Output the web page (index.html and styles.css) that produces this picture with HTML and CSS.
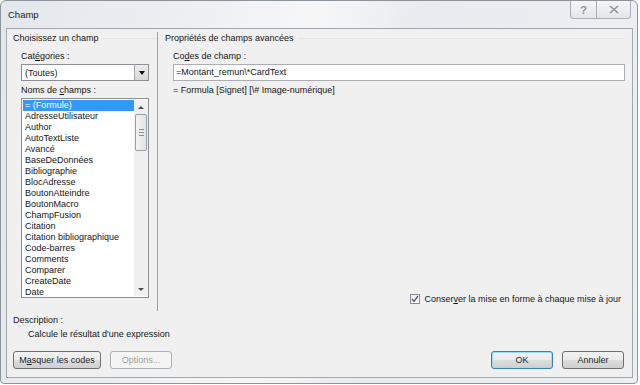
FILE: index.html
```html
<!DOCTYPE html>
<html lang="fr">
<head>
  <meta charset="UTF-8">
  <title>Champ</title>
  <link rel="stylesheet" href="styles.css">
</head>
<body>
  <div class="window">
    <div class="titlebar">
      <span class="title">Champ</span>
      <div class="caption-buttons">
        <span class="cbtn help">?</span>
        <span class="cbtn close">
          <svg width="10" height="9" viewBox="0 0 10 9"><path d="M1 1 L9 8 M9 1 L1 8" stroke="#8d939a" stroke-width="1.6" fill="none"/></svg>
        </span>
      </div>
    </div>

    <div class="client">
      <div class="groups">
        <!-- Left: field chooser -->
        <section class="group group-left">
          <div class="group-title">Choisissez un champ</div>
          <div class="field">
            <label class="caption">Cat<u>é</u>gories :</label>
            <div class="combo">
              <span class="combo-text">(Toutes)</span>
              <span class="combo-btn"><span class="arrow-down"></span></span>
            </div>
          </div>
          <div class="field">
            <label class="caption tight">Noms de <u>c</u>hamps :</label>
            <div class="listbox">
              <ul class="items" id="field-list"></ul>
              <div class="scrollbar">
                <span class="sb-up"></span>
                <span class="sb-thumb"><i></i><i></i><i></i></span>
                <span class="sb-track"></span>
                <span class="sb-down"></span>
              </div>
            </div>
          </div>
        </section>

        <!-- Right: advanced properties -->
        <section class="group group-right">
          <div class="group-title">Propriétés de champs avancées</div>
          <div class="field">
            <label class="caption">Co<u>d</u>es de champ :</label>
            <div class="textbox">=Montant_remun\*CardText</div>
            <div class="syntax">= Formula [Signet] [\# Image-numérique]</div>
          </div>
          <div class="keep-format">
            <span class="checkbox">
              <svg width="8" height="8" viewBox="0 0 8 8"><path d="M1 4 L3 6.5 L7 1" stroke="#4a5a78" stroke-width="1.3" fill="none"/></svg>
            </span>
            <span>Conser<u>v</u>er la mise en forme à chaque mise à jour</span>
          </div>
        </section>
      </div>

      <div class="description">
        <div>Description :</div>
        <div class="desc-text">Calcule le résultat d'une expression</div>
      </div>

      <div class="buttons">
        <button class="btn wide">M<u>a</u>squer les codes</button>
        <button class="btn" disabled>Options...</button>
        <span class="spacer"></span>
        <button class="btn default">OK</button>
        <button class="btn">Annuler</button>
      </div>
    </div>
  </div>

  <script>
    const fieldNames = [
      "= (Formule)", "AdresseUtilisateur", "Author", "AutoTextListe", "Avancé",
      "BaseDeDonnées", "Bibliographie", "BlocAdresse", "BoutonAtteindre",
      "BoutonMacro", "ChampFusion", "Citation", "Citation bibliographique",
      "Code-barres", "Comments", "Comparer", "CreateDate", "Date"
    ];

    const list = document.getElementById("field-list");
    fieldNames.forEach((name, index) => {
      const item = document.createElement("li");
      item.textContent = name;
      if (index === 0) {
        item.classList.add("selected");
      }
      list.appendChild(item);
    });
  </script>
</body>
</html>
```

FILE: styles.css
```css
html, body {
  margin: 0;
  padding: 0;
}
body {
  width: 640px;
  height: 385px;
  background-color: #ffffff;
  font-family: "Liberation Sans", Arial, sans-serif;
  font-size: 9px;
  color: #151515;
  overflow: hidden;
}
u {
  text-decoration: underline;
}

.window {
  width: 638px;
  height: 384px;
  box-sizing: border-box;
  border: 1px solid #8e949b;
  border-radius: 6px 6px 4px 4px;
  background: linear-gradient(100deg, #e3e7ec 0%, #eef0f3 30%, #f7f7f8 45%, #e8ebef 60%, #edf0f3 100%);
  display: flex;
  flex-direction: column;
}

.titlebar {
  height: 27px;
  display: flex;
  align-items: flex-start;
  justify-content: space-between;
}
.title {
  margin: 8px 0 0 7px;
  font-size: 9.5px;
  color: #222;
}
.caption-buttons {
  display: flex;
  margin-right: 6px;
}
.cbtn {
  height: 18px;
  box-sizing: border-box;
  border: 1px solid #a9aeb5;
  border-top: none;
  background: linear-gradient(#f4f5f6, #e3e6ea);
  display: flex;
  align-items: center;
  justify-content: center;
  color: #8d939a;
}
.cbtn.help {
  width: 27px;
  border-radius: 0 0 0 4px;
  font-size: 11px;
  font-weight: bold;
}
.cbtn.close {
  width: 34px;
  border-left: none;
  border-radius: 0 0 4px 0;
}

.client {
  flex: 1;
  margin: 0 4px 5px 5px;
  border: 1px solid #a3a8ae;
  background-color: #f0f0f0;
  display: flex;
  flex-direction: column;
  padding: 3px 0 8px 0;
}

.groups {
  display: flex;
  height: 279px;
}
.group-left {
  width: 144px;
  padding-left: 6px;
  border-right: 1px solid #a0a0a0;
}
.group-right {
  flex: 1;
  padding-left: 7px;
  padding-right: 7px;
  display: flex;
  flex-direction: column;
}
.group-title {
  height: 12px;
  line-height: 12px;
  display: flex;
  align-items: center;
  gap: 4px;
}
.group-title::after {
  content: "";
  flex: 1;
  border-top: 1px solid #e4e4e4;
}

.field {
  padding-left: 8px;
}
.caption {
  display: block;
  height: 12px;
  line-height: 12px;
  margin-top: 6px;
  margin-bottom: 2px;
}
.caption.tight {
  margin-top: 3px;
}

.combo {
  width: 128px;
  height: 17px;
  box-sizing: border-box;
  border: 1px solid #8c8f94;
  background-color: #ffffff;
  display: flex;
  align-items: center;
  justify-content: space-between;
}
.combo-text {
  padding-left: 3px;
}
.combo-btn {
  width: 14px;
  height: 15px;
  box-sizing: border-box;
  border-left: 1px solid #a0a4a9;
  background: linear-gradient(#ececec, #d9d9d9);
  display: flex;
  align-items: center;
  justify-content: center;
}
.arrow-down {
  width: 0;
  height: 0;
  border-left: 3.5px solid transparent;
  border-right: 3.5px solid transparent;
  border-top: 4px solid #111;
}

.listbox {
  width: 128px;
  height: 200px;
  box-sizing: border-box;
  border: 1px solid #8c8f94;
  background-color: #ffffff;
  display: flex;
}
.items {
  list-style: none;
  margin: 0;
  padding: 1px 0 0 1px;
  flex: 1;
}
.items li {
  height: 11px;
  line-height: 11px;
  padding-left: 2px;
  white-space: nowrap;
}
.items li.selected {
  background-color: #3399ff;
  color: #ffffff;
}

.scrollbar {
  width: 14px;
  margin: 1px 0;
  background-color: #f0f0f0;
  display: flex;
  flex-direction: column;
  align-items: center;
}
.sb-up, .sb-down {
  height: 14px;
  display: flex;
  align-items: center;
  justify-content: center;
}
.sb-up::after, .sb-down::after {
  content: "";
  border-left: 3px solid transparent;
  border-right: 3px solid transparent;
}
.sb-up::after {
  border-bottom: 3px solid #4d4d4d;
}
.sb-down::after {
  border-top: 3px solid #4d4d4d;
}
.sb-thumb {
  width: 12px;
  height: 37px;
  box-sizing: border-box;
  border: 1px solid #9a9ea4;
  border-radius: 2px;
  background: linear-gradient(90deg, #f3f3f3, #e2e3e5);
  display: flex;
  flex-direction: column;
  align-items: center;
  justify-content: center;
  gap: 2px;
}
.sb-thumb i {
  width: 5px;
  border-top: 1px solid #8a8e94;
}
.sb-track {
  flex: 1;
}

.textbox {
  height: 17px;
  line-height: 15px;
  box-sizing: border-box;
  border: 1px solid #abadb3;
  background-color: #ffffff;
  padding-left: 2px;
}
.syntax {
  margin-top: 3px;
  line-height: 12px;
}

.keep-format {
  margin-top: auto;
  margin-bottom: 7px;
  display: flex;
  align-items: center;
  justify-content: flex-end;
  gap: 4px;
  padding-right: 4px;
}
.checkbox {
  width: 10px;
  height: 10px;
  box-sizing: border-box;
  border: 1px solid #8f8f8f;
  background: linear-gradient(135deg, #e6e9ee, #ffffff);
  display: flex;
  align-items: center;
  justify-content: center;
}

.description {
  padding-left: 6px;
  margin-top: 3px;
  line-height: 12px;
}
.desc-text {
  padding-left: 15px;
  margin-top: 2px;
}

.buttons {
  margin-top: auto;
  display: flex;
  gap: 9px;
  padding: 0 8px 0 6px;
}
.spacer {
  flex: 1;
}
.btn {
  width: 62px;
  height: 18px;
  padding: 0;
  font-family: inherit;
  font-size: 9px;
  color: #1e1e1e;
  border: 1px solid #707070;
  border-radius: 3px;
  background: linear-gradient(#f2f2f2 0%, #ebebeb 48%, #dddddd 52%, #cfcfcf 100%);
}
.btn.wide {
  width: 88px;
}
.btn:disabled {
  color: #a0a0a0;
  border-color: #adb2b5;
  background: #f4f4f4;
}
.btn.default {
  border-color: #3c7fb1;
  box-shadow: inset 0 0 0 1px #9fdaf6;
}
```
